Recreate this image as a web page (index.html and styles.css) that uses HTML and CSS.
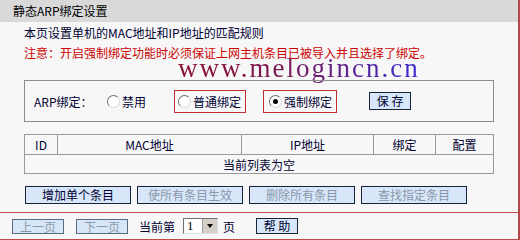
FILE: index.html
```html
<!DOCTYPE html>
<html lang="zh-CN">
<head>
  <meta charset="UTF-8">
  <title>静态ARP绑定设置</title>
  <link rel="stylesheet" href="styles.css">
</head>
<body>
  <div class="frame">
    <div class="title">静态ARP绑定设置</div>

    <div class="content">
      <p class="intro">本页设置单机的MAC地址和IP地址的匹配规则</p>
      <p class="notice">注意：开启强制绑定功能时必须保证上网主机条目已被导入并且选择了绑定。</p>
      <div class="watermark">www.melogincn.cn</div>

      <div class="arp-box">
        <span class="arp-label">ARP绑定：</span>
        <label class="opt"><span class="radio"></span>禁用</label>
        <label class="opt marked"><span class="radio"></span>普通绑定</label>
        <label class="opt marked"><span class="radio checked"></span>强制绑定</label>
        <button class="btn save">保 存</button>
      </div>

      <table class="list">
        <tr>
          <th class="c-id">ID</th>
          <th class="c-mac">MAC地址</th>
          <th class="c-ip">IP地址</th>
          <th class="c-bind">绑定</th>
          <th class="c-cfg">配置</th>
        </tr>
        <tr>
          <td colspan="5">当前列表为空</td>
        </tr>
      </table>

      <div class="actions">
        <button class="btn wide">增加单个条目</button>
        <button class="btn wide off">使所有条目生效</button>
        <button class="btn wide off">删除所有条目</button>
        <button class="btn wide off">查找指定条目</button>
      </div>
    </div>

    <div class="pager">
      <button class="btn page off">上一页</button>
      <button class="btn page off">下一页</button>
      <span class="cur">当前第</span>
      <span class="select"><span class="val">1</span><span class="arrow"></span></span>
      <span class="unit">页</span>
      <button class="btn help">帮 助</button>
    </div>
  </div>
</body>
</html>
```

FILE: styles.css
```css
body {
  margin: 0;
  font-family: "Noto Sans CJK SC", sans-serif;
  font-size: 12px;
  color: #000033;
  background: #ffffff;
}
p {
  margin: 0;
}
.frame {
  width: 518px;
  height: 240px;
  overflow: hidden;
  border-right: 2px solid #b54848;
  background: #f7f7f7;
  position: relative;
}
.title {
  height: 22px;
  line-height: 22px;
  padding-left: 13px;
  background: #d9d9d9;
  color: #000;
}
.content {
  padding: 1px 0 0 24px;
  position: relative;
}
.intro,
.notice {
  line-height: 20px;
}
.notice {
  color: #cc0000;
}
/* watermark lies over the notice line */
.watermark {
  position: absolute;
  left: 178px;
  top: 31px;
  font-family: "Liberation Serif", serif;
  font-size: 27px;
  letter-spacing: 2px;
  line-height: 30px;
  background: linear-gradient(90deg, #8a1030 0%, #7a1c58 45%, #3c2cd0 100%);
  -webkit-background-clip: text;
  background-clip: text;
  color: transparent;
}
.arp-box {
  margin-top: 17px;
  width: 468px;
  height: 40px;
  border: 1px solid #8c8c8c;
  display: flex;
  align-items: center;
  position: relative;
}
.arp-label {
  margin-left: 9px;
  width: 73px;
}
.opt {
  display: flex;
  align-items: center;
  gap: 2px;
  height: 21px;
}
.opt:nth-of-type(1) {
  margin-right: 28px;
}
.opt.marked {
  border: 1px solid #c03030;
  padding: 0 4px 0 3px;
}
.opt.marked + .opt.marked {
  margin-left: 17px;
  padding-left: 5px;
}
.radio {
  width: 11px;
  height: 11px;
  border-radius: 50%;
  border: 1px solid;
  border-color: #707070 #d8d8d8 #d8d8d8 #707070;
  background: #fff;
  position: relative;
}
.radio.checked::after {
  content: "";
  position: absolute;
  left: 3px;
  top: 3px;
  width: 5px;
  height: 5px;
  border-radius: 50%;
  background: #000;
}
.btn {
  font-family: inherit;
  font-size: 12px;
  color: #000033;
  background: #d7e6f8;
  border: 1px solid #1a2438;
  padding: 0;
  line-height: 14px;
}
.btn.off {
  color: #8a98ac;
}
.save {
  margin-left: 32px;
  width: 42px;
  height: 18px;
}
.list {
  margin-top: 12px;
  width: 470px;
  border-collapse: collapse;
}
.list th,
.list td {
  border: 1px solid #9a9a9a;
  font-weight: normal;
  text-align: center;
  padding: 0;
}
.list th {
  height: 19px;
}
.list td {
  height: 18px;
}
.c-id { width: 32px; }
.c-mac { width: 183px; }
.c-ip { width: 131px; }
.c-bind { width: 61px; }
.actions {
  margin-top: 12px;
  margin-left: 1px;
  display: flex;
  gap: 6px;
}
.wide {
  width: 106px;
  height: 18px;
}
.pager {
  position: absolute;
  left: 0;
  right: 0;
  top: 212px;
  height: 26px;
  border-top: 1px solid #c04848;
  border-bottom: 1px solid #c04848;
  display: flex;
  align-items: center;
  padding-left: 12px;
}
.page {
  width: 52px;
  height: 15px;
  margin-right: 12px;
  border-color: #5a6a80;
}
.cur {
  margin-left: -1px;
}
.select {
  margin-left: 8px;
  width: 33px;
  height: 14px;
  border: 1px solid;
  border-color: #707070 #e0e0e0 #e0e0e0 #707070;
  background: #fff;
  display: flex;
  align-items: center;
  justify-content: space-between;
  color: #000;
}
.val {
  padding-left: 3px;
  font-family: "Liberation Serif", serif;
  font-size: 13px;
}
.arrow {
  width: 14px;
  height: 14px;
  background: #d4d0c8;
  border-left: 1px solid #a0a0a0;
  position: relative;
}
.arrow::after {
  content: "";
  position: absolute;
  left: 4px;
  top: 5px;
  border-left: 3.5px solid transparent;
  border-right: 3.5px solid transparent;
  border-top: 4px solid #000;
}
.unit {
  margin-left: 5px;
}
.help {
  margin-left: 21px;
  width: 42px;
  height: 16px;
}
```
